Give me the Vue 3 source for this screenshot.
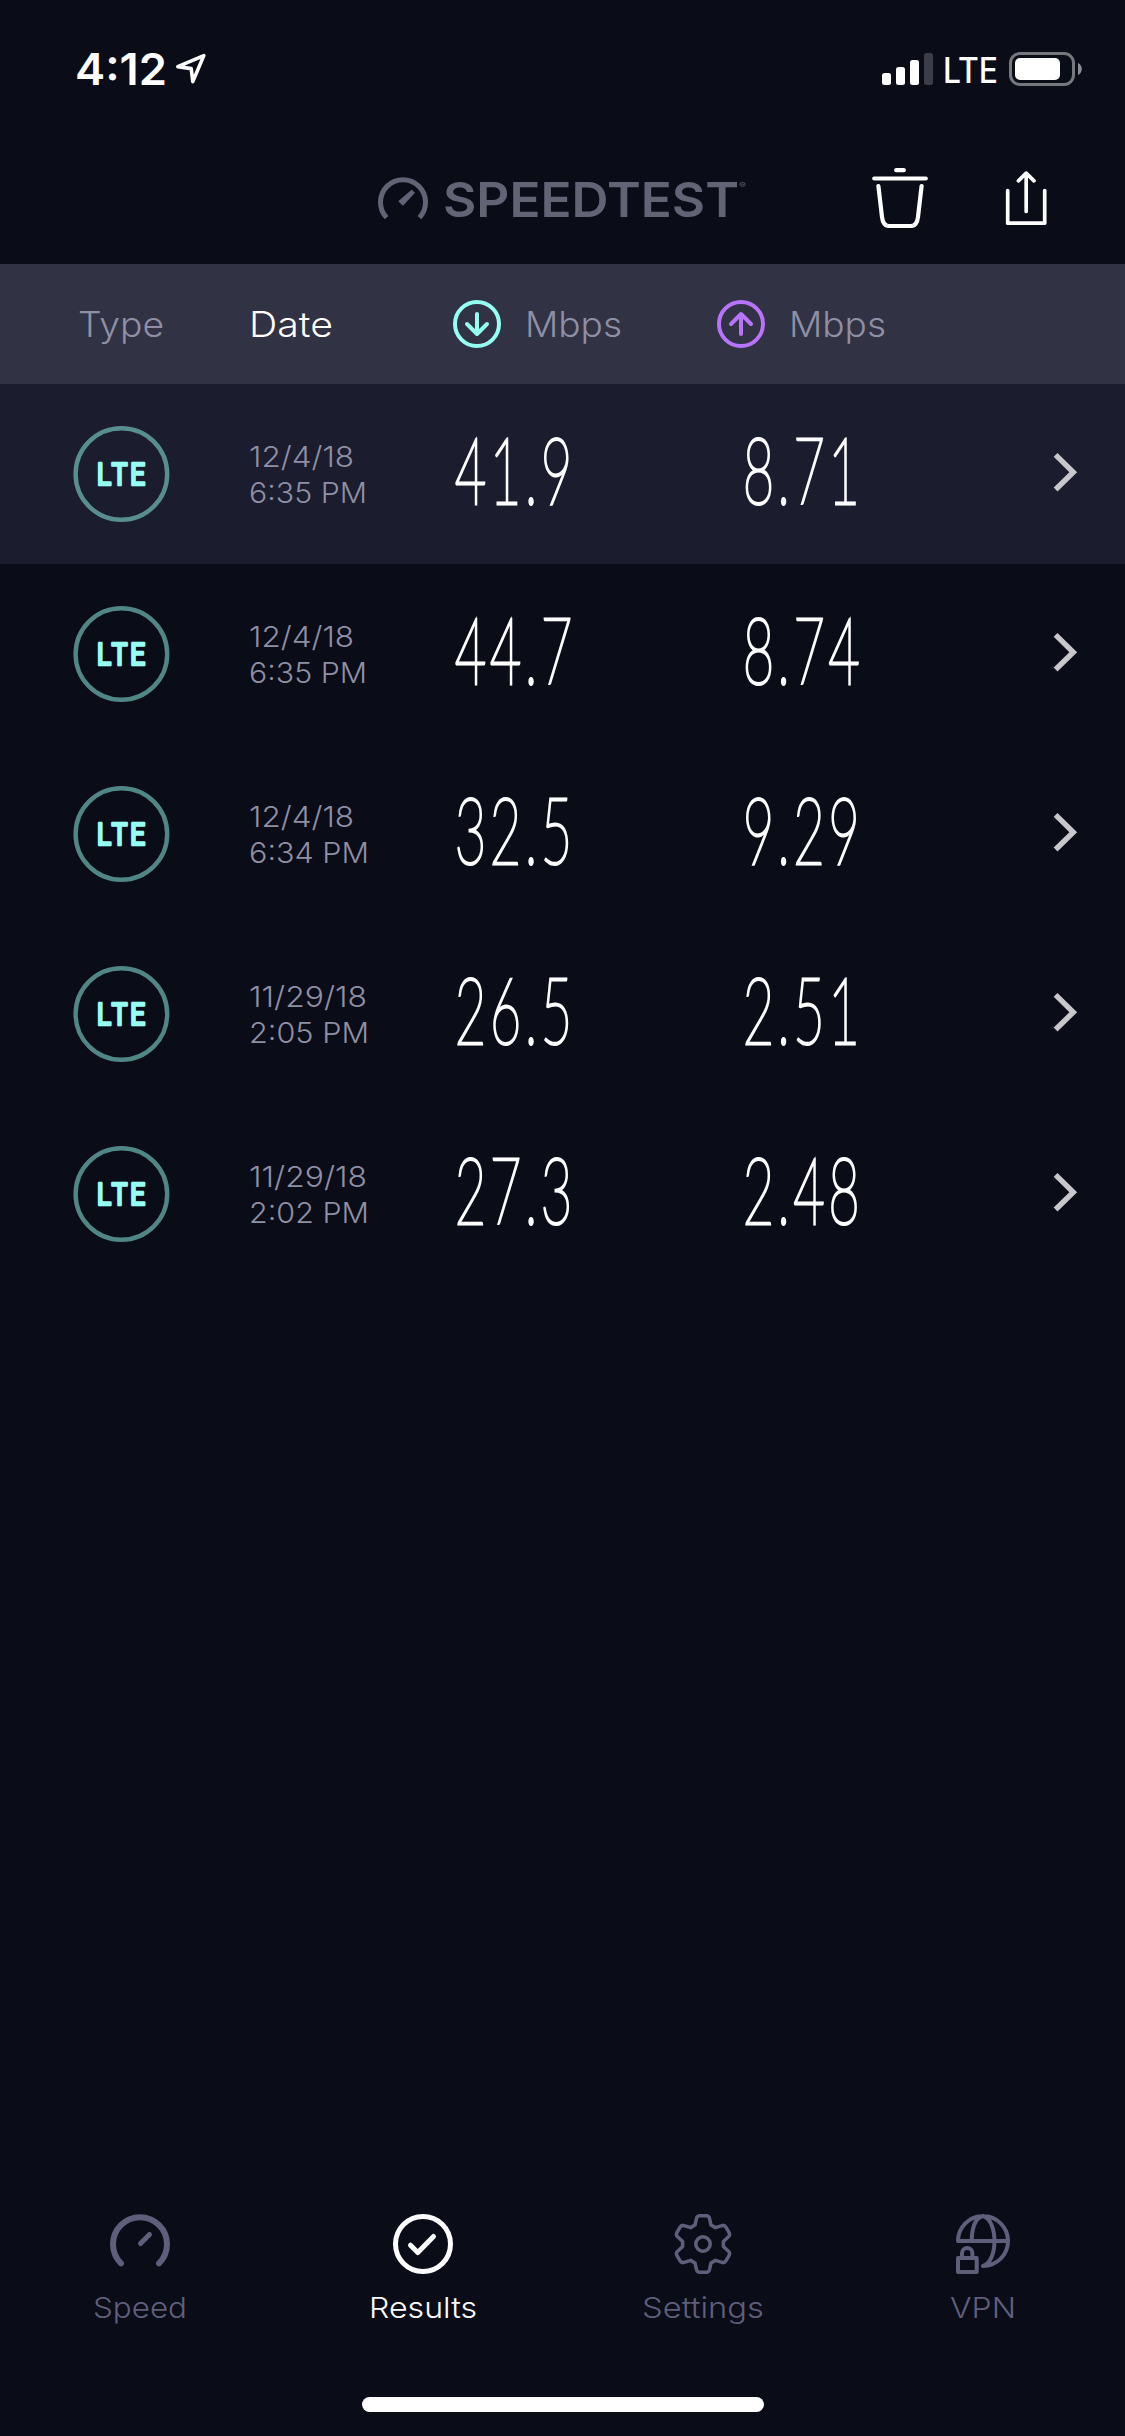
<script setup>
import { h } from 'vue'

// Single line of text set to an exact measure, with its baseline at `base`.
const FitText = (p) =>
  h('svg', { width: p.w, height: p.h, viewBox: `0 0 ${p.w} ${p.h}`, overflow: 'visible' }, [
    h('text', { x: 0, y: p.base, 'font-size': p.size, 'font-weight': p.weight || 350, fill: 'currentColor', textLength: p.w, lengthAdjust: 'spacingAndGlyphs' }, p.text)
  ])
FitText.props = ['text', 'w', 'h', 'base', 'size', 'weight']

// Condensed thin figures, every glyph centred in its own cell.
const SCALE = 0.585
const Figure = (p) => {
  const centres = p.text.indexOf('.') === 2 ? [16.5, 51.5, 77, 102.5] : [16.5, 41.5, 67, 102]
  return h('svg', { width: 120, height: 180, viewBox: '0 0 120 180', overflow: 'visible' }, [
    h('text', {
      transform: `scale(${SCALE} 1)`,
      x: centres.map((c) => (c / SCALE).toFixed(2)).join(' '),
      y: 119.9,
      'font-size': 93,
      'font-weight': 100,
      'font-family': 'Lato, sans-serif',
      'text-anchor': 'middle',
      fill: '#fff',
      stroke: '#fff',
      'stroke-width': 2.5,
      style: 'vector-effect: non-scaling-stroke'
    }, p.text)
  ])
}
Figure.props = ['text']

const rows = [
  { date: '12/4/18', dw: 105, time: '6:35 PM', tw: 118, down: '41.9', up: '8.71' },
  { date: '12/4/18', dw: 105, time: '6:35 PM', tw: 118, down: '44.7', up: '8.74' },
  { date: '12/4/18', dw: 105, time: '6:34 PM', tw: 120, down: '32.5', up: '9.29' },
  { date: '11/29/18', dw: 118, time: '2:05 PM', tw: 120, down: '26.5', up: '2.51' },
  { date: '11/29/18', dw: 118, time: '2:02 PM', tw: 120, down: '27.3', up: '2.48' }
]

const spokes = [0, 60, 120, 180, 240, 300]
const rot = (x, y, deg) => {
  const a = (deg * Math.PI) / 180
  return `${(30 + x * Math.cos(a) - y * Math.sin(a)).toFixed(2)} ${(30 + x * Math.sin(a) + y * Math.cos(a)).toFixed(2)}`
}
const gear =
  spokes
    .map((d, i) => `${i ? 'L' : 'M'}${rot(-8, -18.9, d)} L${rot(-6.5, -25.6, d)} Q${rot(-5.8, -28.3, d)} ${rot(-3.2, -28.3, d)} L${rot(3.2, -28.3, d)} Q${rot(5.8, -28.3, d)} ${rot(6.5, -25.6, d)} L${rot(8, -18.9, d)}`)
    .join(' ') + 'Z'
</script>

<template>
  <div class="screen">
    <div class="status">
      <FitText class="clock" text="4:12" :w="92" :h="132" :base="85" :size="44" :weight="600" />
      <svg class="loc" width="34" height="34" viewBox="0 0 34 34"><path d="M3.8 14.6 29.8 3.6 18.8 29.6 17.2 16.6Z" fill="none" stroke="#fff" stroke-width="3.6" stroke-linejoin="round" /></svg>
      <svg class="bars" width="52" height="32" viewBox="0 0 52 32">
        <rect x="0" y="20" width="9" height="12" rx="2.5" fill="#fff" />
        <rect x="14" y="14" width="9" height="18" rx="2.5" fill="#fff" />
        <rect x="28" y="7" width="9" height="25" rx="2.5" fill="#fff" />
        <rect x="42" y="0" width="9" height="32" rx="2.5" fill="#3c3d47" />
      </svg>
      <FitText class="carrier" text="LTE" :w="55" :h="132" :base="83" :size="35" :weight="450" />
      <svg class="battery" width="74" height="34" viewBox="0 0 74 34">
        <rect x="1.5" y="1.5" width="63" height="31" rx="9.5" fill="none" stroke="#77777f" stroke-width="3" />
        <rect x="6" y="6" width="45" height="22" rx="5" fill="#fff" />
        <path d="M69 11C74 13 74 21 69 23Z" fill="#8d8d94" />
      </svg>
    </div>

    <div class="nav">
      <svg class="gauge" width="50" height="44" viewBox="0 0 50 44">
        <path d="M8.6 40.6A22.5 22.5 0 1 1 41.4 40.6" fill="none" stroke="#636376" stroke-width="5" />
        <path d="M20.2 24.2 33.6 12.8 37 15.8 25 28.8Z" fill="#636376" />
      </svg>
      <FitText class="brand" text="SPEEDTEST" :w="296" :h="132" :base="85" :size="48.5" :weight="600" />
      <FitText class="reg" text="®" :w="7" :h="132" :base="56" :size="8" :weight="400" />
      <svg class="trash" width="60" height="64" viewBox="0 0 60 64" fill="none" stroke="#fff" stroke-width="4.2" stroke-linecap="round" stroke-linejoin="round">
        <path d="M26.2 6.2H33.8M4.2 14.5H55.8M8.4 22 12 53C12.8 59.4 15.5 62 19 62H41C44.5 62 47.2 59.4 48 53L51.6 22" />
      </svg>
      <svg class="share" width="44" height="56" viewBox="0 0 44 56" fill="none" stroke="#fff" stroke-width="3.7" stroke-linecap="round" stroke-linejoin="round">
        <path d="M3.7 20.5V53.2H40.7V20.5M22.2 41.5V3.2M14.4 10.8 22.2 3.2 30 10.8" />
      </svg>
    </div>

    <div class="head">
      <div class="h-type"><FitText text="Type" :w="86" :h="120" :base="73" :size="35" /></div>
      <div class="h-date"><FitText text="Date" :w="84" :h="120" :base="73" :size="35" /></div>
      <div class="h-speed">
        <svg width="48" height="48" viewBox="0 0 48 48" fill="none" stroke="#95fff3" stroke-width="4" stroke-linecap="round" stroke-linejoin="round"><circle cx="24" cy="24" r="22" /><path d="M24 14V34M14 24 24 34 34 24" /></svg>
        <FitText text="Mbps" :w="97" :h="120" :base="73" :size="35" />
      </div>
      <div class="h-speed">
        <svg width="48" height="48" viewBox="0 0 48 48" fill="none" stroke="#b873fb" stroke-width="4" stroke-linecap="round" stroke-linejoin="round"><circle cx="24" cy="24" r="22" /><path d="M24 34V14M14 24 24 14 34 24" /></svg>
        <FitText text="Mbps" :w="97" :h="120" :base="73" :size="35" />
      </div>
    </div>

    <div class="list">
      <div v-for="(r, i) in rows" :key="i" class="row" :class="{ active: i === 0 }">
        <svg class="badge" width="97" height="96" viewBox="0 0 97 96">
          <circle cx="48.4" cy="48" r="45.8" fill="none" stroke="#95fff3" stroke-opacity=".5" stroke-width="4.4" />
          <text x="36.8 55.3 77" y="59.3" transform="scale(.84 1)" class="badge-text">LTE</text>
        </svg>
        <div class="when">
          <FitText :text="r.date" :w="r.dw" :h="36" :base="29" :size="29" />
          <FitText :text="r.time" :w="r.tw" :h="36" :base="29" :size="29" />
        </div>
        <Figure :text="r.down" />
        <Figure :text="r.up" />
        <svg class="chev" width="26" height="40" viewBox="0 0 26 40"><path d="M2.6 2.9 20.3 20.2 2.6 37.5" fill="none" stroke="#c7c7cc" stroke-width="5.4" /></svg>
      </div>
    </div>

    <div class="tabs">
      <div class="tab">
        <svg width="60" height="60" viewBox="0 0 60 60" fill="none" stroke="currentColor" stroke-linecap="round"><path d="M11 49.4A27 27 0 1 1 49 49.4" stroke-width="6" /><path d="M30.5 29.5 39.5 20.5" stroke-width="5" /></svg>
        <FitText text="Speed" :w="94" :h="44" :base="44" :size="29" />
      </div>
      <div class="tab on">
        <svg width="60" height="60" viewBox="0 0 60 60" fill="none" stroke="currentColor" stroke-width="5" stroke-linecap="round" stroke-linejoin="round"><circle cx="30" cy="30" r="27.5" /><path d="M17.5 31.2 24.8 38.5 40.5 22.5" /></svg>
        <FitText text="Results" :w="108" :h="44" :base="44" :size="29" />
      </div>
      <div class="tab">
        <svg width="60" height="60" viewBox="0 0 60 60" fill="none" stroke="currentColor" stroke-width="3.5" stroke-linejoin="round"><path :d="gear" /><circle cx="30" cy="30" r="7.2" /></svg>
        <FitText text="Settings" :w="122" :h="44" :base="44" :size="29" />
      </div>
      <div class="tab">
        <svg width="60" height="60" viewBox="0 0 60 60" fill="none" stroke="currentColor" stroke-width="4" stroke-linecap="round" stroke-linejoin="round">
          <path d="M30 52A25 25 0 1 0 5 27H55M30 2C21 4 18.7 17 18.7 27M30 2C45.3 6 45.3 48 30 52" />
          <path d="M5 44H23.7V58H5ZM9 44V39.2A5.2 5.2 0 0 1 19.4 39.2V44" />
        </svg>
        <FitText text="VPN" :w="66" :h="44" :base="44" :size="29" />
      </div>
    </div>
    <div class="home"></div>
  </div>
</template>

<style>
body { background: #0a0c18; }
</style>

<style scoped>
.screen { width: 1125px; height: 2436px; display: flex; flex-direction: column; background: #0a0c18; color: #fff; font-family: Inter, "Liberation Sans", sans-serif; overflow: hidden; }
svg { display: block; flex: none; }
.status { height: 132px; display: flex; align-items: flex-start; padding-left: 75px; }
.loc { margin: 52px 0 0 7px; }
.bars { margin: 53px 0 0 674px; }
.carrier { margin-left: 9px; }
.battery { margin: 52px 0 0 11px; }
.nav { height: 132px; display: flex; align-items: flex-start; padding-left: 378px; color: #636376; }
.gauge { margin-top: 45px; }
.brand { margin-left: 15px; }
.trash { margin: 32px 0 0 124px; }
.share { margin: 38px 0 0 74px; }
.head { height: 120px; display: grid; grid-template-columns: 250px 203px 264px 1fr; background: #313244; color: #8f8fa5; }
.h-type { padding-left: 78px; }
.h-date { color: #fff; margin-left: -1px; }
.h-speed { display: flex; align-items: center; gap: 24px; }
.list { flex: 1; }
.row { height: 180px; display: grid; grid-template-columns: 249px 204.5px 288px 1fr 72px; align-items: center; color: #8f8fa5; }
.row.active { background: #1b1c2d; }
.badge { margin-left: 73px; }
.badge-text { font-family: Roboto, sans-serif; font-size: 32px; font-weight: 400; fill: #95fff3; stroke: #95fff3; stroke-width: 2.5px; stroke-linejoin: round; text-anchor: middle; }
.chev { margin-top: -4px; }
.tabs { height: 183px; display: grid; grid-template-columns: 280px 285px 276px 284px; color: #5f5f7c; }
.tab { display: flex; flex-direction: column; align-items: center; }
.tab.on { color: #fff; }
.home { width: 402px; height: 15px; border-radius: 8px; background: #fff; margin: 0 auto 24px 362px; flex: none; }
</style>
